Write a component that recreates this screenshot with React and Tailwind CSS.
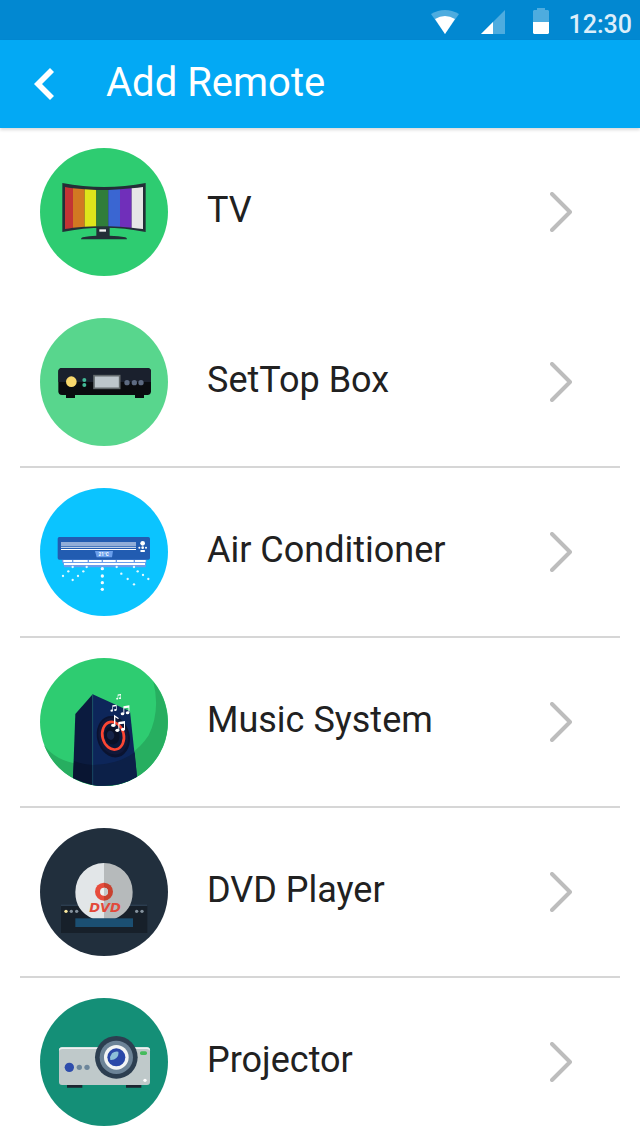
import { useState } from "react";

// All device drawings share one 384 unit circle, starting at 18,18
const DeviceIcon = ({ background, children }) => (
  <svg viewBox="18 18 384 384" className="size-32 shrink-0" aria-hidden="true">
    <circle cx="210" cy="210" r="192" fill={background} />
    {children}
  </svg>
);

const TvIcon = () => (
  <DeviceIcon background="#2ecc71">
    <path d="M85 123Q210 147 335 123V270Q210 244 85 270Z" fill="#232f37" />
    <path d="M93 135Q105 138 117 139V257Q105 259 93 261Z" fill="#c23434" />
    <path d="M117 139L152 142V254L117 257Z" fill="#d27822" />
    <path d="M152 142L187 144V253L152 254Z" fill="#dfe51b" />
    <path d="M187 144H223V253H187Z" fill="#307d3a" />
    <path d="M223 144L258 142V254L223 253Z" fill="#3a66d2" />
    <path d="M258 142L293 139V257L258 254Z" fill="#702fba" />
    <path d="M293 139Q312 137 327 135V261Q312 259 293 257Z" fill="#e6e6e6" />
    <path d="M187 256H227V281Q255 282 274 286Q279 288 279 292H141Q141 288 146 286Q165 282 187 281Z" fill="#232f37" />
    <rect x="196" y="262" width="20" height="7" fill="#f2f2f2" />
  </DeviceIcon>
);

const SetTopBoxIcon = () => (
  <DeviceIcon background="#58d68d">
    <path d="M96 246H123V258H96ZM303 246H330V258H303Z" fill="#0a0c10" />
    <rect x="73" y="168" width="278" height="81" rx="11" fill="#0a0c10" />
    <path d="M73 210V179Q73 168 84 168H340Q351 168 351 179V210Z" fill="#1a202d" />
    <circle cx="112" cy="209" r="16" fill="#f8d76c" />
    <circle cx="151" cy="204" r="6" fill="#42b896" />
    <circle cx="151" cy="219" r="6" fill="#42b896" />
    <rect x="180" y="191" width="77" height="38" fill="#bdc6cc" stroke="#62696c" strokeWidth="5" />
    <circle cx="279" cy="212" r="8" fill="#5d6a81" />
    <circle cx="301" cy="212" r="8" fill="#5d6a81" />
    <circle cx="321" cy="212" r="8" fill="#5d6a81" />
  </DeviceIcon>
);

const AIR_DOTS = [
  [116, 255], [158, 255], [248, 255], [300, 255],
  [103, 268], [148, 268], [311, 268], [262, 275], [327, 279],
  [87, 282], [132, 282], [281, 291], [343, 291], [116, 294], [300, 307],
];

const AirConditionerIcon = () => (
  <DeviceIcon background="#0bc4ff">
    <path d="M84 230H338L335 256H91Q88 244 84 240Z" fill="#6a9eec" />
    <path d="M88 234H335V240H88ZM90 243H333V249H90Z" fill="#fff" />
    <path d="M114 234h4v6h-4zM161 234h4v6h-4zM203 234h4v6h-4zM245 234h4v6h-4zM299 234h4v6h-4z" fill="#6a9eec" />
    <rect x="71" y="165" width="277" height="68" rx="5" fill="#225cb1" />
    <rect x="81" y="180" width="225" height="12" fill="#91add8" />
    <path d="M81 194H306V198H81Z" fill="#bfd0e9" />
    <path d="M81 201H306V204H81Z" fill="#fff" />
    <path d="M183 207H237L234 226H188Z" fill="#6a9eec" />
    <text x="209" y="222" textAnchor="middle" fill="#fff" fontSize="14" fontWeight="700">21°C</text>
    <circle cx="326" cy="184" r="7" fill="#fff" />
    <circle cx="316" cy="197" r="3" fill="#fff" />
    <circle cx="326" cy="197" r="4" fill="#fff" />
    <circle cx="336" cy="197" r="3" fill="#fff" />
    <rect x="319" y="204" width="14" height="6" rx="2" fill="#fff" />
    {AIR_DOTS.map(([x, y]) => (
      <circle key={`${x}-${y}`} cx={x} cy={y} r="3.5" fill="#e6faff" />
    ))}
    {[260, 282, 302, 322].map((y) => (
      <circle key={y} cx="205" cy={y} r="5" fill="#f2fcff" />
    ))}
  </DeviceIcon>
);

const Note = ({ x, y, size }) => (
  <g transform={`translate(${x} ${y}) scale(${size})`} fill="#fff">
    <ellipse cx="5" cy="28" rx="6" ry="5" />
    <ellipse cx="22" cy="25" rx="6" ry="5" />
    <path d="M8 3L28 0V25H25V8L11 10V28H8Z" />
  </g>
);

const MusicSystemIcon = () => (
  <DeviceIcon background="#2ecc71">
    <path d="M358 89A192 192 0 1 1 30 279Q73 339 177 339Q290 334 344 250Q380 175 358 89Z" fill="#27ae60" />
    <path d="M124 186L176 127V399Q145 392 117 378Z" fill="#0b1b3f" />
    <path d="M176 127L288 178L309 374Q248 410 176 399Z" fill="#0d265a" />
    <path d="M120 327Q145 337 176 339V399Q145 392 117 378Z" fill="#091532" />
    <path d="M176 339Q255 337 302 301L309 374Q248 410 176 399Z" fill="#0c2048" />
    <path d="M176 127V399" stroke="#1f5b73" strokeWidth="2" />
    <g transform="rotate(-14 238 254)">
      <ellipse cx="238" cy="254" rx="49" ry="63" fill="#0a1330" />
      <ellipse cx="238" cy="252" rx="44" ry="56" fill="#10183a" />
      <ellipse cx="238" cy="251" rx="32" ry="42" fill="#0b1839" stroke="#fb4633" strokeWidth="8" />
      <ellipse cx="235" cy="250" rx="22" ry="27" fill="#0a1027" />
      <ellipse cx="231" cy="248" rx="11" ry="14" fill="#152247" />
    </g>
    <Note x="247" y="126" size="0.5" />
    <Note x="230" y="158" size="0.64" />
    <Note x="261" y="160" size="0.9" />
    <Note x="245" y="207" size="1" />
    <path d="M240 188L255 199L252 201L244 196V220H240Z" fill="#fff" />
    <ellipse cx="238" cy="220" rx="7" ry="5" fill="#fff" />
  </DeviceIcon>
);

const DvdPlayerIcon = () => (
  <DeviceIcon background="#212f3d">
    <rect x="81" y="247" width="259" height="86" fill="#17202a" />
    <rect x="81" y="247" width="259" height="5" fill="#2c3e50" />
    <path d="M124 210A86 86 0 0 1 210 123V290H177Q124 268 124 210Z" fill="#e2e6e8" />
    <path d="M210 123A86 86 0 0 1 296 210Q296 268 243 290H210Z" fill="#b6babb" />
    <path d="M210 182A27 27 0 0 0 210 236Z" fill="#e74c3c" />
    <path d="M210 182A27 27 0 0 1 210 236Z" fill="#c8412f" />
    <circle cx="210" cy="209" r="12" fill="#eef1f1" />
    <path d="M210 197A12 12 0 0 1 210 221Z" fill="#c5c9ca" />
    <text
      x="213"
      y="271"
      textAnchor="middle"
      fill="#e2493a"
      fontFamily="DejaVu Sans, sans-serif"
      fontSize="39"
      fontWeight="700"
      fontStyle="italic"
    >
      DVD
    </text>
    <rect x="124" y="289" width="173" height="26" fill="#1b4f72" />
    <circle cx="96" cy="268" r="5" fill="#f9e79f" />
    {[112, 128, 308, 324].map((x) => (
      <circle key={x} cx={x} cy="268" r="5" fill="#85929e" />
    ))}
  </DeviceIcon>
);

const ProjectorIcon = () => (
  <DeviceIcon background="#148f77">
    <path d="M99 276H145V287H99ZM276 276H322V287H276Z" fill="#1b2631" />
    <rect x="75" y="166" width="273" height="113" rx="9" fill="#bfc9ca" />
    <path d="M75 176Q75 166 84 166H339Q348 166 348 176Q345 171 339 171H84Q78 171 75 176Z" fill="#edf1f1" />
    <circle cx="106" cy="226" r="14" fill="#2e4dac" />
    <circle cx="136" cy="226" r="8" fill="#6c869b" />
    <circle cx="159" cy="226" r="8" fill="#6c869b" />
    <rect x="318" y="178" width="21" height="11" rx="5" fill="#45bb5c" />
    <circle cx="333" cy="265" r="5" fill="#fff" />
    <circle cx="247" cy="196" r="64" fill="#2c3e50" />
    <circle cx="247" cy="196" r="50" fill="#6c8397" />
    <circle cx="247" cy="196" r="37" fill="#f2f4f4" />
    <circle cx="247" cy="196" r="27" fill="#2a48a8" />
    <path d="M229 204Q226 194 234 184Q242 177 253 179Q255 190 247 198Q240 205 229 204Z" fill="#8cbfd8" />
  </DeviceIcon>
);

const DEVICES = [
  { id: "tv", name: "TV", Icon: TvIcon },
  { id: "settop-box", name: "SetTop Box", Icon: SetTopBoxIcon },
  { id: "air-conditioner", name: "Air Conditioner", Icon: AirConditionerIcon },
  { id: "music-system", name: "Music System", Icon: MusicSystemIcon },
  { id: "dvd-player", name: "DVD Player", Icon: DvdPlayerIcon },
  { id: "projector", name: "Projector", Icon: ProjectorIcon },
];

const StatusBar = () => (
  <div className="flex h-10 shrink-0 items-end justify-end bg-[#0288d1] pr-2 pb-1.5">
    <svg width="28" height="24" viewBox="0 0 28 24" className="mr-[22px]">
      <path d="M0 4Q14 -4 28 4L14 24Z" fill="#4eacdf" />
      <path d="M4 9Q14 3 24 9L14 24Z" fill="#fff" />
    </svg>
    <svg width="24" height="24" viewBox="0 0 24 24" className="mr-7">
      <path d="M24 0V24H0Z" fill="#4eacdf" />
      <path d="M12 12V24H0Z" fill="#fff" />
    </svg>
    <svg width="16" height="26" viewBox="0 0 16 26" className="mr-5">
      <path d="M4 0H12V2H15L16 3V14H0V3L1 2H4Z" fill="#4eacdf" />
      <path d="M0 14H16V25L15 26H1L0 25Z" fill="#fff" />
    </svg>
    <time className="text-[25px] leading-[18px] font-medium text-[#dceefa]">12:30</time>
  </div>
);

const DeviceRow = ({ device, onSelect }) => {
  const { id, name, Icon } = device;

  return (
    <li className="border-b-2 border-[#d6d6d6] first:border-transparent">
      <a
        href={`#${id}`}
        onClick={() => onSelect(id)}
        className="flex items-center py-5 pr-12 pl-5"
      >
        <Icon />
        <span className="ml-[39px] flex-1 pb-1 text-4xl text-[#212121]">{name}</span>
        <svg width="22" height="40" viewBox="0 0 22 40" fill="none" aria-hidden="true">
          <path
            d="M2 2L20 20L2 38"
            stroke="#bdbdbd"
            strokeWidth="4"
            strokeLinecap="round"
            strokeLinejoin="round"
          />
        </svg>
      </a>
    </li>
  );
};

const App = () => {
  const [, setSelected] = useState(null);

  return (
    <div className="flex h-screen flex-col overflow-hidden bg-white font-[Roboto,sans-serif]">
      <StatusBar />
      <header className="z-10 flex h-22 shrink-0 items-center bg-[#03a9f4] pl-[34px] text-white shadow-[0_2px_3px_rgba(0,0,0,0.15)]">
        <button type="button" aria-label="Back" className="cursor-pointer">
          <svg width="20" height="32" viewBox="0 0 20 32" fill="currentColor">
            <path d="M16 0L20 4L8 16L20 28L16 32L0 16Z" />
          </svg>
        </button>
        <h1 className="ml-[52px] pb-0.5 text-[40px]">Add Remote</h1>
      </header>
      <main className="min-h-0 flex-1 overflow-y-auto px-5 [scrollbar-width:none]">
        <ul>
          {DEVICES.map((device) => (
            <DeviceRow key={device.id} device={device} onSelect={setSelected} />
          ))}
        </ul>
      </main>
    </div>
  );
};

export default App;
